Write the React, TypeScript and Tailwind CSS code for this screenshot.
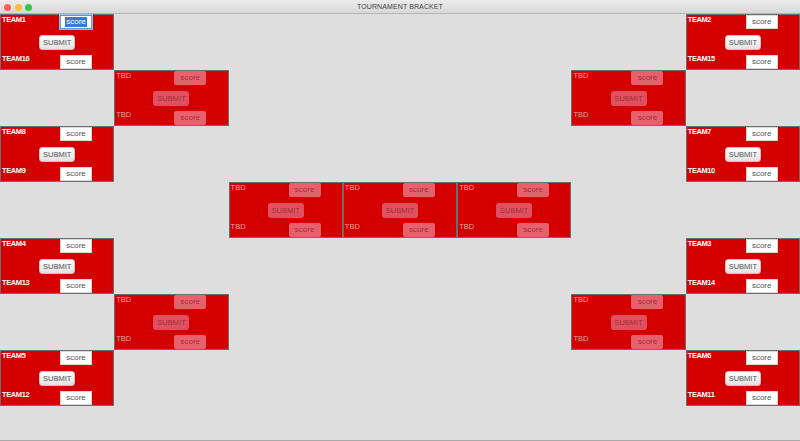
type Match = {
  top: string;
  bottom: string;
  pos: string;
  tbd?: boolean;
  focused?: boolean;
};

const MATCHES: Match[] = [
  // left bracket, round 1
  { top: 'TEAM1', bottom: 'TEAM16', pos: 'col-start-1 row-start-1', focused: true },
  { top: 'TEAM8', bottom: 'TEAM9', pos: 'col-start-1 row-start-3' },
  { top: 'TEAM4', bottom: 'TEAM13', pos: 'col-start-1 row-start-5' },
  { top: 'TEAM5', bottom: 'TEAM12', pos: 'col-start-1 row-start-7' },
  // left bracket, round 2
  { top: 'TBD', bottom: 'TBD', pos: 'col-start-2 row-start-2', tbd: true },
  { top: 'TBD', bottom: 'TBD', pos: 'col-start-2 row-start-6', tbd: true },
  // semis + final
  { top: 'TBD', bottom: 'TBD', pos: 'col-start-3 row-start-4', tbd: true },
  { top: 'TBD', bottom: 'TBD', pos: 'col-start-4 row-start-4', tbd: true },
  { top: 'TBD', bottom: 'TBD', pos: 'col-start-5 row-start-4', tbd: true },
  // right bracket, round 2
  { top: 'TBD', bottom: 'TBD', pos: 'col-start-6 row-start-2', tbd: true },
  { top: 'TBD', bottom: 'TBD', pos: 'col-start-6 row-start-6', tbd: true },
  // right bracket, round 1
  { top: 'TEAM2', bottom: 'TEAM15', pos: 'col-start-7 row-start-1' },
  { top: 'TEAM7', bottom: 'TEAM10', pos: 'col-start-7 row-start-3' },
  { top: 'TEAM3', bottom: 'TEAM14', pos: 'col-start-7 row-start-5' },
  { top: 'TEAM6', bottom: 'TEAM11', pos: 'col-start-7 row-start-7' },
];

function ScoreBox({ tbd, focused }: { tbd?: boolean; focused?: boolean }) {
  if (tbd) {
    return (
      <div className="flex h-[14px] w-[32px] items-center justify-center rounded-[2px] bg-[#e8606c] text-[8px] text-[#a8323e]">
        score
      </div>
    );
  }
  return (
    <div
      className={
        focused
          ? 'flex h-[14px] w-[32px] items-center justify-center border border-[#5a9be0] bg-white text-[8px] text-white shadow-[0_0_0_1px_#8fbdec]'
          : 'flex h-[14px] w-[32px] items-center justify-center border border-[#d8d8d8] bg-white text-[8px] text-[#555]'
      }
    >
      {focused ? <span className="bg-[#2f7ed8] px-px leading-[10px]">score</span> : 'score'}
    </div>
  );
}

function SubmitButton({ tbd }: { tbd?: boolean }) {
  return (
    <div
      className={
        tbd
          ? 'flex h-[15px] w-[36px] items-center justify-center rounded-[3px] bg-[#df5060] text-[7.5px] text-[#a8303c]'
          : 'flex h-[15px] w-[36px] items-center justify-center rounded-[3px] border border-[#c4c4c4] bg-gradient-to-b from-white to-[#e2e2e2] text-[7.5px] text-[#555]'
      }
    >
      SUBMIT
    </div>
  );
}

function MatchBox({ m }: { m: Match }) {
  const label = m.tbd
    ? 'w-[59px] pl-px text-[7.5px] text-[#f0a0a0]'
    : 'w-[59px] pl-px text-[7.5px] font-bold text-white tracking-[-0.4px]';
  return (
    <div className={`${m.pos} flex h-[56px] flex-col border border-[#6e6e6e] bg-[#d40000]`}>
      <div className="flex h-[14px] items-start">
        <div className={`${label} leading-[10px]`}>{m.top}</div>
        <ScoreBox tbd={m.tbd} focused={m.focused} />
      </div>
      <div className="mt-[6px] flex justify-center">
        <SubmitButton tbd={m.tbd} />
      </div>
      <div className="mt-[5px] flex h-[14px] items-start">
        <div className={`${label} leading-[7px]`}>{m.bottom}</div>
        <ScoreBox tbd={m.tbd} />
      </div>
    </div>
  );
}

export default function App() {
  return (
    <div
      className="flex h-[441px] w-[800px] flex-col overflow-hidden bg-[#dedede]"
      style={{ fontFamily: '"Liberation Sans", Arial, sans-serif' }}
    >
      {/* window chrome */}
      <div className="relative flex h-[14px] shrink-0 items-center justify-center border-b border-[#b4b4b4] bg-gradient-to-b from-[#ececec] to-[#d8d8d8]">
        <div className="absolute left-[4px] top-[3.5px] flex gap-[3.5px]">
          <span className="h-[7px] w-[7px] rounded-full bg-[#fc605b]" />
          <span className="h-[7px] w-[7px] rounded-full bg-[#fdbc40]" />
          <span className="h-[7px] w-[7px] rounded-full bg-[#34c84a]" />
        </div>
        <span className="text-[7px] leading-none tracking-[0.1px] text-[#3f3f3f]">TOURNAMENT BRACKET</span>
      </div>

      {/* bracket */}
      <div className="grid grid-cols-7 grid-rows-[repeat(7,56px)]">
        {MATCHES.map((m, i) => (
          <MatchBox key={i} m={m} />
        ))}
      </div>

      <div className="mt-auto h-px bg-[#a8a8a8]" />
    </div>
  );
}
